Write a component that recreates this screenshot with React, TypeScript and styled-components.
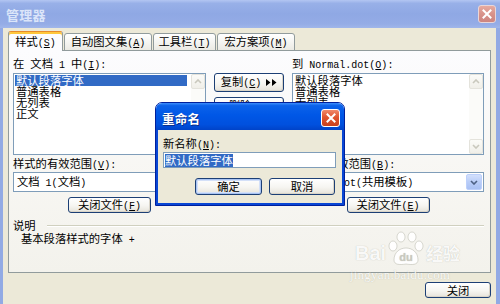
import React from "react";
import styled, { createGlobalStyle } from "styled-components";

const GlobalStyle = createGlobalStyle`
  html, body { margin: 0; padding: 0; }
  body {
    width: 500px;
    height: 304px;
    overflow: hidden;
    background: #ece9d8;
    font-family: "Noto Sans CJK SC", "Liberation Sans", sans-serif;
    font-size: 11.3px;
    color: #000;
  }
  #root { width: 500px; height: 304px; }
`;

/* ---------- text helpers ---------- */
const Latin = styled.span`
  font-family: "Liberation Mono", monospace;
  font-size: 10px;
`;
const Accel = styled.span`
  text-decoration: underline;
`;
const TxtWrap = styled.span`
  white-space: pre;
`;

const CJK_RE = /[\u2E80-\u9FFF\uFF00-\uFFEF]/;

function accel(run: string) {
  const segs = run.split(/\(([A-Z])\)/);
  const out: React.ReactNode[] = [];
  segs.forEach((seg, i) => {
    if (i % 2 === 1) {
      out.push("(");
      out.push(<Accel key={i}>{seg}</Accel>);
      out.push(")");
    } else if (seg) {
      out.push(seg);
    }
  });
  return out;
}

function Txt({ s }: { s: string }) {
  const runs = s.split(/([\u2E80-\u9FFF\uFF00-\uFFEF]+)/).filter((r) => r !== "");
  return (
    <TxtWrap>
      {runs.map((r, i) =>
        CJK_RE.test(r) ? (
          <React.Fragment key={i}>{r}</React.Fragment>
        ) : (
          <Latin key={i}>{accel(r)}</Latin>
        )
      )}
    </TxtWrap>
  );
}

/* ---------- window chrome ---------- */
const Window = styled.div`
  position: relative;
  width: 500px;
  height: 304px;
  display: flex;
  flex-direction: column;
  background: #ece9d8;
  overflow: hidden;
`;

const TitleBar = styled.div<{ $active?: boolean; $h: number }>`
  flex: none;
  height: ${(p) => p.$h}px;
  display: flex;
  align-items: center;
  justify-content: space-between;
  padding: 0 4px 0 6px;
  background: ${(p) =>
    p.$active
      ? "linear-gradient(180deg, #3c8dfb 0%, #0b62ea 10%, #0057e6 45%, #0050de 80%, #0043c8 100%)"
      : "linear-gradient(180deg, #b3c6f2 0%, #98b0e8 12%, #8fa8e4 50%, #94ace6 85%, #a0b6ea 100%)"};
`;

const TitleText = styled.span<{ $active?: boolean }>`
  font-weight: 700;
  font-size: ${(p) => (p.$active ? "12.5px" : "13px")};
  letter-spacing: 0.2px;
  color: ${(p) => (p.$active ? "#ffffff" : "#dbe5f9")};
  text-shadow: ${(p) => (p.$active ? "1px 1px 0 #0a2f8a" : "none")};
  padding-top: ${(p) => (p.$active ? "3px" : "0")};
`;

const CloseBox = styled.div<{ $active?: boolean; $w: number; $h: number }>`
  width: ${(p) => p.$w}px;
  height: ${(p) => p.$h}px;
  box-sizing: border-box;
  border: 1px solid ${(p) => (p.$active ? "#ffffff" : "#e9d6d8")};
  border-radius: 3px;
  background: ${(p) =>
    p.$active
      ? "linear-gradient(180deg, #f08a6c 0%, #e0552f 45%, #c8401d 100%)"
      : "linear-gradient(180deg, #e6aba0 0%, #d8928a 50%, #cd8580 100%)"};
  display: flex;
  align-items: center;
  justify-content: center;
  margin-top: ${(p) => (p.$active ? "3px" : "0")};
`;

function CloseButton({ active, w, h }: { active?: boolean; w: number; h: number }) {
  return (
    <CloseBox $active={active} $w={w} $h={h}>
      <svg width="10" height="10" viewBox="0 0 10 10">
        <path d="M1.5 1.5 L8.5 8.5 M8.5 1.5 L1.5 8.5" stroke="#fff" strokeWidth="2" strokeLinecap="square" />
      </svg>
    </CloseBox>
  );
}

const Frame = styled.div`
  flex: 1;
  display: flex;
  flex-direction: column;
  border-left: 3px solid #92aae4;
  border-right: 4px solid #92aae4;
  padding: 3px 5px 0 5px;
`;

/* ---------- tabs ---------- */
const TabRow = styled.div`
  flex: none;
  height: 20px;
  display: flex;
  align-items: flex-end;
  gap: 1px;
  margin-bottom: -1px;
  position: relative;
  z-index: 1;
`;

const Tab = styled.div<{ $active?: boolean; $w: number }>`
  box-sizing: border-box;
  width: ${(p) => p.$w}px;
  height: ${(p) => (p.$active ? 20 : 18)}px;
  display: flex;
  align-items: center;
  justify-content: center;
  border: 1px solid #919b9c;
  border-bottom: ${(p) => (p.$active ? "none" : "1px solid #919b9c")};
  border-top-color: ${(p) => (p.$active ? "#e68b2c" : "#919b9c")};
  border-radius: 3px 3px 0 0;
  background: ${(p) => (p.$active ? "#fcfcfe" : "linear-gradient(180deg, #ffffff 0%, #f3f3ef 60%, #ebeae3 100%)")};
  box-shadow: ${(p) => (p.$active ? "inset 0 2px 0 #ffc83c" : "none")};
  padding-top: ${(p) => (p.$active ? "2px" : "0")};
  line-height: 13px;
`;

const Panel = styled.div`
  flex: none;
  height: 223px;
  box-sizing: border-box;
  border: 1px solid #919b9c;
  background: linear-gradient(180deg, #fcfcfe 0%, #f7f6f2 60%, #f3f2ec 100%);
  padding: 6px 6px 0 4px;
  display: flex;
  flex-direction: column;
`;

const Columns = styled.div`
  display: grid;
  grid-template-columns: 193px 70px 192px;
  column-gap: 8px;
`;

const SideCol = styled.div`
  display: flex;
  flex-direction: column;
`;

const Label = styled.div<{ $gap?: number }>`
  height: 13px;
  line-height: 13px;
  margin-top: ${(p) => p.$gap ?? 0}px;
  white-space: nowrap;
`;

/* ---------- list box ---------- */
const ListBox = styled.div`
  height: 82px;
  margin-top: 3px;
  box-sizing: border-box;
  border: 1px solid #7f9db9;
  background: #fff;
  display: flex;
`;

const Items = styled.div`
  flex: 1;
  padding: 1px 4px 1px 1px;
`;

const Item = styled.div<{ $sel?: boolean }>`
  height: 11px;
  line-height: 11px;
  padding-left: 1px;
  white-space: nowrap;
  background: ${(p) => (p.$sel ? "#316ac5" : "transparent")};
  color: ${(p) => (p.$sel ? "#fff" : "#000")};
`;

const ScrollTrack = styled.div`
  width: 14px;
  display: flex;
  flex-direction: column;
  justify-content: space-between;
  background: #fbfbf9;
`;

const ScrollArrow = styled.div`
  height: 15px;
  box-sizing: border-box;
  border: 1px solid #e4e3dc;
  border-radius: 2px;
  background: linear-gradient(180deg, #fbfbf8, #f0efe9);
  display: flex;
  align-items: center;
  justify-content: center;
`;

function Chevron({ down, color }: { down?: boolean; color: string }) {
  return (
    <svg width="8" height="5" viewBox="0 0 8 5">
      <path
        d={down ? "M1 1 L4 4 L7 1" : "M1 4 L4 1 L7 4"}
        fill="none"
        stroke={color}
        strokeWidth="1.6"
      />
    </svg>
  );
}

/* ---------- combo ---------- */
const Combo = styled.div`
  height: 20px;
  margin-top: 2px;
  box-sizing: border-box;
  border: 1px solid #7f9db9;
  background: #fff;
  display: flex;
  align-items: center;
`;

const ComboText = styled.div`
  flex: 1;
  min-width: 0;
  padding-left: 3px;
  line-height: 13px;
  white-space: nowrap;
`;

const ComboArrow = styled.div`
  flex: none;
  width: 16px;
  height: 16px;
  margin-right: 1px;
  box-sizing: border-box;
  border: 1px solid #bdd0fb;
  border-radius: 2px;
  background: linear-gradient(180deg, #d3e0fc 0%, #b9cdf8 50%, #a9c1f4 100%);
  display: flex;
  align-items: center;
  justify-content: center;
`;

/* ---------- buttons ---------- */
const Button = styled.div<{ $w: number; $h: number; $default?: boolean }>`
  flex: none;
  width: ${(p) => p.$w}px;
  height: ${(p) => p.$h}px;
  box-sizing: border-box;
  border: 1px solid #1c3f75;
  border-radius: 3px;
  background: linear-gradient(180deg, #ffffff 0%, #f6f5f1 55%, #e6e3da 100%);
  box-shadow: ${(p) =>
    p.$default ? "inset 0 0 0 1px #a9c4f3, inset 0 0 0 2px #d4e0f8" : "inset -1px -1px 0 #d9d4c8"};
  display: flex;
  align-items: center;
  justify-content: center;
  line-height: 13px;
  white-space: nowrap;
`;

const SideButton = styled(Button)`
  align-self: center;
  margin-top: 5px;
`;

const MiddleCol = styled.div`
  padding-top: 16px;
  display: flex;
  flex-direction: column;
  gap: 5px;
`;

const Arrows = styled.svg`
  margin-left: 5px;
`;

/* ---------- description ---------- */
const DescHeader = styled.div`
  margin-top: 6px;
  height: 13px;
  line-height: 13px;
  display: flex;
  align-items: center;
  gap: 11px;
`;

const Groove = styled.div`
  flex: 1;
  height: 0;
  border-top: 1px solid #d0d0bf;
  border-bottom: 1px solid #ffffff;
`;

const DescText = styled.div`
  padding-left: 8px;
  height: 13px;
  line-height: 13px;
`;

const Footer = styled.div`
  display: flex;
  justify-content: flex-end;
  padding-top: 9px;
`;

/* ---------- rename dialog ---------- */
const Dialog = styled.div`
  position: absolute;
  left: 155px;
  top: 102px;
  width: 190px;
  height: 104px;
  box-sizing: border-box;
  border: 1px solid #00209c;
  border-radius: 7px 7px 0 0;
  overflow: hidden;
  display: flex;
  flex-direction: column;
  z-index: 5;
`;

const DialogFrame = styled.div`
  flex: 1;
  display: flex;
  background: #0846d4;
  padding: 0 2px 2px 2px;
`;

const DialogBody = styled.div`
  flex: 1;
  background: #ece9d8;
  padding: 7px 6px 0 5px;
  display: flex;
  flex-direction: column;
`;

const TextInput = styled.div`
  margin-top: 2px;
  height: 16px;
  box-sizing: border-box;
  border: 1px solid #7f9db9;
  background: #fff;
  padding-left: 1px;
  display: flex;
  align-items: center;
`;

const Selected = styled.span`
  background: #316ac5;
  color: #fff;
  line-height: 13px;
`;

const DialogButtons = styled.div`
  margin-top: 10px;
  display: flex;
  justify-content: flex-end;
  gap: 7px;
  padding-right: 1px;
`;

/* ---------- watermark ---------- */
const Watermark = styled.div`
  position: absolute;
  left: 350px;
  top: 230px;
  width: 125px;
  height: 55px;
  z-index: 3;
  color: rgba(255, 255, 255, 0.92);
  text-shadow: 0 0 1px rgba(140, 140, 125, 0.55);
  pointer-events: none;
`;

const WmRow = styled.div`
  display: flex;
  align-items: flex-end;
  height: 38px;
  padding-left: 5px;
`;

const WmBai = styled.span`
  font-family: "Liberation Sans", sans-serif;
  font-weight: 700;
  font-size: 20px;
  line-height: 20px;
  margin-bottom: 5px;
`;

const WmJing = styled.span`
  font-family: "Noto Sans CJK SC", sans-serif;
  font-weight: 700;
  font-size: 17px;
  line-height: 18px;
  margin-bottom: 6px;
`;

const WmUrl = styled.div`
  font-family: "Liberation Serif", serif;
  font-size: 13px;
  line-height: 13px;
  letter-spacing: 0.2px;
`;

const PawSvg = styled.svg`
  margin-bottom: 2px;
`;

function Paw() {
  return (
    <PawSvg width="40" height="36" viewBox="0 0 40 36">
      <g fill="rgba(255,255,255,0.92)" stroke="rgba(150,150,135,0.45)" strokeWidth="0.8">
        <ellipse cx="7" cy="16" rx="4" ry="5" />
        <ellipse cx="15" cy="7" rx="4" ry="5" />
        <ellipse cx="26" cy="7" rx="4" ry="5" />
        <ellipse cx="33" cy="16" rx="4" ry="5" />
        <path d="M8 30 C8 22 14 18 20 18 C26 18 32 22 32 30 C32 35 26 35 20 34 C14 35 8 35 8 30 Z" />
      </g>
      <text x="20" y="31" textAnchor="middle" fontFamily="Liberation Sans, sans-serif" fontWeight="700" fontSize="11" fill="rgba(200,200,190,0.9)">
        du
      </text>
    </PawSvg>
  );
}

/* ---------- pieces ---------- */
type SideProps = {
  title: string;
  items: string[];
  selected?: number;
  scope: string;
  value: string;
  close: string;
};

function SidePane({ title, items, selected, scope, value, close }: SideProps) {
  return (
    <SideCol>
      <Label>
        <Txt s={title} />
      </Label>
      <ListBox>
        <Items>
          {items.map((it, i) => (
            <Item key={it} $sel={i === selected}>
              <Txt s={it} />
            </Item>
          ))}
        </Items>
        <ScrollTrack>
          <ScrollArrow>
            <Chevron color="#c9c8bd" />
          </ScrollArrow>
          <ScrollArrow>
            <Chevron down color="#c9c8bd" />
          </ScrollArrow>
        </ScrollTrack>
      </ListBox>
      <Label $gap={2}>
        <Txt s={scope} />
      </Label>
      <Combo>
        <ComboText>
          <Txt s={value} />
        </ComboText>
        <ComboArrow>
          <Chevron down color="#4d6185" />
        </ComboArrow>
      </Combo>
      <SideButton $w={83} $h={16}>
        <Txt s={close} />
      </SideButton>
    </SideCol>
  );
}

const tabs = [
  { label: "样式(S)", w: 55, active: true },
  { label: "自动图文集(A)", w: 88 },
  { label: "工具栏(T)", w: 63 },
  { label: "宏方案项(M)", w: 78 },
];

export default function App() {
  return (
    <>
      <GlobalStyle />
      <Window>
        <TitleBar $h={28}>
          <TitleText>管理器</TitleText>
          <CloseButton w={18} h={18} />
        </TitleBar>
        <Frame>
          <TabRow>
            {tabs.map((t) => (
              <Tab key={t.label} $active={t.active} $w={t.w}>
                <Txt s={t.label} />
              </Tab>
            ))}
          </TabRow>
          <Panel>
            <Columns>
              <SidePane
                title="在 文档 1 中(I):"
                items={["默认段落字体", "普通表格", "无列表", "正文"]}
                selected={0}
                scope="样式的有效范围(V):"
                value="文档 1(文档)"
                close="关闭文件(F)"
              />
              <MiddleCol>
                <Button $w={70} $h={19}>
                  <Txt s="复制(C)" />
                  <Arrows width="11" height="7" viewBox="0 0 11 7">
                    <path d="M0 0 L4.5 3.5 L0 7 Z M6 0 L10.5 3.5 L6 7 Z" fill="#000" />
                  </Arrows>
                </Button>
                <Button $w={70} $h={19}>
                  <Txt s="删除(D)" />
                </Button>
                <Button $w={70} $h={19}>
                  <Txt s="重命名(R)..." />
                </Button>
              </MiddleCol>
              <SidePane
                title="到 Normal.dot(O):"
                items={["默认段落字体", "普通表格", "无列表", "正文"]}
                scope="样式的有效范围(B):"
                value="Normal.dot(共用模板)"
                close="关闭文件(E)"
              />
            </Columns>
            <DescHeader>
              <span>说明</span>
              <Groove />
            </DescHeader>
            <DescText>
              <Txt s="基本段落样式的字体 +" />
            </DescText>
          </Panel>
          <Footer>
            <Button $w={66} $h={16}>
              关闭
            </Button>
          </Footer>
        </Frame>

        <Watermark>
          <WmRow>
            <WmBai>Bai</WmBai>
            <Paw />
            <WmJing>经验</WmJing>
          </WmRow>
          <WmUrl>jingyan.baidu.com</WmUrl>
        </Watermark>

        <Dialog>
          <TitleBar $active $h={27}>
            <TitleText $active>重命名</TitleText>
            <CloseButton active w={19} h={18} />
          </TitleBar>
          <DialogFrame>
            <DialogBody>
              <Label>
                <Txt s="新名称(N):" />
              </Label>
              <TextInput>
                <Selected>默认段落字体</Selected>
              </TextInput>
              <DialogButtons>
                <Button $w={67} $h={17} $default>
                  确定
                </Button>
                <Button $w={66} $h={17}>
                  取消
                </Button>
              </DialogButtons>
            </DialogBody>
          </DialogFrame>
        </Dialog>
      </Window>
    </>
  );
}
